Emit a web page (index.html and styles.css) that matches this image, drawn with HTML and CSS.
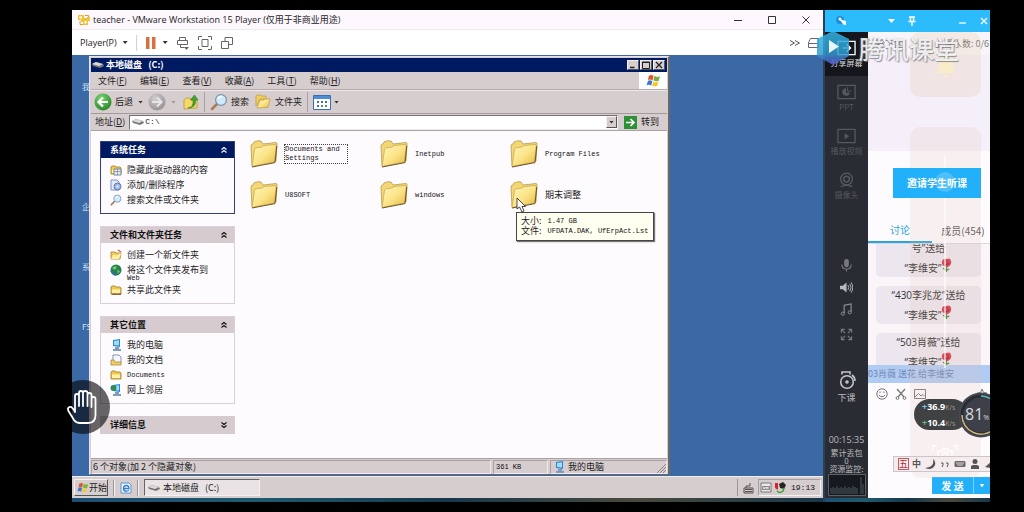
FILE: index.html
```html
<!DOCTYPE html>
<html lang="zh-CN">
<head>
<meta charset="utf-8">
<title>teacher - VMware Workstation 15 Player</title>
<link rel="stylesheet" href="styles.css">
</head>
<body>
<svg class="defs" aria-hidden="true">
  <defs>
    <linearGradient id="gFold" x1="0" y1="0" x2="1" y2="1"><stop offset="0" stop-color="#fff6b8"/><stop offset=".5" stop-color="#fbe58a"/><stop offset="1" stop-color="#e6b93f"/></linearGradient>
    <radialGradient id="gGreen" cx=".4" cy=".3" r=".8"><stop offset="0" stop-color="#7fd873"/><stop offset="1" stop-color="#1c7d22"/></radialGradient>
    <radialGradient id="gGray" cx=".4" cy=".3" r=".8"><stop offset="0" stop-color="#d2cdd0"/><stop offset="1" stop-color="#8f8b90"/></radialGradient>
    <linearGradient id="gHex" x1="0" y1="0" x2="0" y2="1"><stop offset="0" stop-color="#31b5e4"/><stop offset=".65" stop-color="#2f9cd0"/><stop offset="1" stop-color="#5b4fd0"/></linearGradient>
  </defs>
  <symbol id="folder" viewBox="0 0 28 28">
    <path d="M2 26 1 6Q1 4 3 4L4 2Q8 0 11 1L13 4 26 2.500Q27 2.500 27 4L26 21Z" fill="#f3d774" stroke="#b5994a" stroke-width=".8"/>
    <path d="M2 26.500 4.500 9.500Q5 8 6.500 7.800L12 7 14 5.500 25 4.500Q26.500 4.500 26.300 6L24.500 22Z" fill="url(#gFold)" stroke="#c4a04a" stroke-width=".7"/>
    <path d="M2 27 25 22.600 26.800 6" fill="none" stroke="#6e5523" stroke-width="1"/>
  </symbol>
  <symbol id="drive" viewBox="0 0 12 8"><path d="M0 3 4 1 11 3 12 5 8 7 1 5Z" fill="#777"/><path d="M0 3 4 1 11 3 7 5Z" fill="#d8d8d8"/></symbol>
  <symbol id="smallfolder" viewBox="0 0 12 12"><path d="M1 10V3l1-1h3l1 1h4l1 1v6Z" fill="#f2c94e" stroke="#9b7d28" stroke-width=".8"/><path d="M2 5.500h8V9H2Z" fill="#fff2a6"/></symbol>
  <symbol id="lens" viewBox="0 0 18 18"><path d="M2 16 8 10" stroke="#a97d57" stroke-width="2.600" stroke-linecap="round"/><circle cx="11" cy="7" r="5.400" fill="#cfeafb" stroke="#7793ab" stroke-width="1.200"/><path d="M8 6q1-3 4-2.500" stroke="#fff" stroke-width="1.500" fill="none"/></symbol>
  <symbol id="pc" viewBox="0 0 12 12"><path d="M3 1 10 0V8L3 7Z" fill="#2c86d8"/><path d="M4 2 9 1.300V6.500L4 6Z" fill="#9fdcff"/><path d="M5 8H9V10H11V12H3V10H5Z" fill="#7e9cc0"/></symbol>
  <symbol id="flag" viewBox="0 0 16 14"><path d="M3 2q3-2 5 0L7 7Q4 5 2 6.500Z" fill="#e0572c"/><path d="M9 2q2 2 6 .5L13.500 7.500Q11 8.500 8 7Z" fill="#79b23c"/><path d="M2 7.500q2-1.500 4.800.3L5.500 12.500Q3 11 .5 12Z" fill="#3d78cf"/><path d="M7.800 8Q10 9.500 13.300 8.500L12 13Q9 14 6.500 12.500Z" fill="#f5c732"/></symbol>
  <symbol id="up" viewBox="0 0 8 8"><path d="M1.500 3.500 4 1.500 6.500 3.500M1.500 6.500 4 4.500 6.500 6.500" fill="none" stroke="currentColor" stroke-width="1.200"/></symbol>
  <symbol id="rose" viewBox="0 0 12 16"><path d="M6 8V15M6 13 2 11M6 13 9 12" stroke="#4c8a3d" stroke-width="1.400" fill="none"/><path d="M1 3Q3 0 6 1 10-1 11 3 12 8 7 10 2 9 1 6Z" fill="#d8394b"/><path d="M4 3q3-1 4 1t-3 3M3 6q2 3 6 0" stroke="#8f1c30" fill="none" stroke-width=".9"/></symbol>
</svg>

<div class="screen">
  <main class="vm">
    <header class="vm-title">
      <svg class="vm-logo" viewBox="0 0 12 12"><path d="M0 1H6V4H9V3H12V7H10V11H5V8H3V6H0Z" fill="#efc23a"/><path d="M1.500 2.500h2.500v2h-2.500ZM6.500 7h2v2.500h-2Z" fill="#fff"/><path d="M7 1.500H10.500V3M2 7V10.500H5" stroke="#e39a28" fill="none"/></svg>
      <h1>teacher - VMware Workstation 15 Player (仅用于非商业用途)</h1>
      <div class="vm-controls">
        <button aria-label="最小化"><svg viewBox="0 0 10 10"><path d="M1 5.500H9" stroke="#333"/></svg></button>
        <button aria-label="最大化"><svg viewBox="0 0 10 10"><path d="M1.500 1.500h7v7h-7Z" fill="none" stroke="#333"/></svg></button>
        <button aria-label="关闭"><svg viewBox="0 0 10 10"><path d="M1.500 1.500 8.500 8.500M8.500 1.500 1.500 8.500" stroke="#333"/></svg></button>
      </div>
    </header>
    <div class="vm-bar">
      <button class="player">Player(P) <i class="tri"></i></button>
      <span class="vsep"></span>
      <button class="pause" aria-label="暂停"><svg viewBox="0 0 12 12"><path d="M1 0h3.500v12H1ZM7 0h3.500v12H7Z" fill="#d9713f"/></svg><i class="tri"></i></button>
      <button aria-label="发送按键"><svg class="i14" viewBox="0 0 14 14" fill="none" stroke="#666"><path d="M3.500 4.500v-3h6v3M1.500 8.500v-4h10v4ZM4.500 8.500v3h4"/><path d="M8 11h5l-2.500 3Z" fill="#666" stroke="none"/></svg></button>
      <button aria-label="全屏"><svg class="i14" viewBox="0 0 14 14" fill="none" stroke="#666"><path d="M.5 4V.500H4M10 .500h3.500V4M13.500 10v3.500H10M4 13.500H.5V10M4 3.500h6v7H4Z"/></svg></button>
      <button aria-label="Unity"><svg class="i14" viewBox="0 0 14 14" fill="none" stroke="#666"><path d="M1.500 5.500h7v7h-7ZM5 5.500v-4h7.500v7H8.500"/></svg></button>
      <div class="vm-bar-end">
        <svg class="i12" viewBox="0 0 12 12" fill="none" stroke="#555"><path d="M1 3.500 5.500 6 1 8.500M6 3.500 10.500 6 6 8.500"/></svg>
        <svg class="i12" viewBox="0 0 12 12" fill="none" stroke="#667"><path d="M1.500 10.500v-5l2-4h8v9ZM1.500 6.500h9"/></svg>
      </div>
    </div>

    <div class="desktop">
      <div class="desk-labels"><span>我</span><span>企业</span><span>系</span><span>FS</span></div>
      <section class="explorer">
        <header class="ex-title">
          <svg class="drive"><use href="#drive"/></svg>
          <h2>本地磁盘&nbsp;&nbsp; (C:)</h2>
          <button aria-label="最小化"><svg viewBox="0 0 8 8"><path d="M1 6.500H5.500" stroke="#222" stroke-width="1.500"/></svg></button>
          <button aria-label="最大化"><svg viewBox="0 0 8 8"><path d="M.5 1h7v6.500h-7ZM.5 1.500h7" fill="none" stroke="#222"/></svg></button>
          <button aria-label="关闭"><svg viewBox="0 0 8 8"><path d="M1 1 7 7M7 1 1 7" stroke="#222" stroke-width="1.300"/></svg></button>
        </header>
        <nav class="ex-menu">
          <button>文件(<u>F</u>)</button><button>编辑(<u>E</u>)</button><button>查看(<u>V</u>)</button><button>收藏(<u>A</u>)</button><button>工具(<u>T</u>)</button><button>帮助(<u>H</u>)</button>
          <span class="brand"><svg><use href="#flag"/></svg></span>
        </nav>
        <div class="ex-tools">
          <button><svg class="i18" viewBox="0 0 18 18"><circle cx="9" cy="9" r="8.500" fill="url(#gGreen)"/><path d="M14 9H5M9 4.500 4.500 9 9 13.500" stroke="#fff" stroke-width="2.200" fill="none"/></svg>后退</button>
          <i class="tri"></i>
          <button aria-label="前进"><svg class="i18" viewBox="0 0 18 18"><circle cx="9" cy="9" r="8.500" fill="url(#gGray)"/><path d="M4 9H13M9 4.500 13.500 9 9 13.500" stroke="#e9e5e7" stroke-width="2" fill="none"/></svg></button>
          <i class="tri faint"></i>
          <button aria-label="向上" class="upbtn"><svg class="i16" viewBox="0 0 16 16"><path d="M1 15V6l2-2h4l1 2h6v8Z" fill="#f6d868" stroke="#b99737" stroke-width=".8"/><path d="M5 14Q11 13 10 6H7.500L11.500 1 15 6H12.500Q13 14 5 14Z" fill="#46a332" stroke="#2b7a1f" stroke-width=".6"/></svg></button>
          <span class="vsep"></span>
          <button><svg class="i18"><use href="#lens"/></svg>搜索</button>
          <button class="fold"><svg class="i16" viewBox="0 0 16 16"><path d="M1 12V2l1-1h3l1 1h5v3H5Z" fill="#f1cf5c" stroke="#bd9a3d" stroke-width=".7"/><path d="M2 14 5 6h4l1-1h5l-2 8.500Z" fill="url(#gFold)" stroke="#bd9a3d" stroke-width=".7"/></svg>文件夹</button>
          <span class="vsep"></span>
          <button aria-label="查看"><svg class="view" viewBox="0 0 18 15"><path d="M.5.500h17v14H.5Z" fill="#fff" stroke="#3b6fb4"/><path d="M1 1h16v3H1Z" fill="#4c8bd6"/><path d="M4 6h2v2H4ZM8 6h2v2H8ZM12 6h2v2h-2ZM4 10h2v2H4Z" fill="#4a6c9e"/><path d="M8 10h2v2H8ZM12 10h2v2h-2Z" fill="#4b9a52"/></svg><i class="tri"></i></button>
        </div>
        <div class="ex-addr">
          <label for="addr">地址(<u>D</u>)</label>
          <div class="addr-box"><svg class="drive"><use href="#drive"/></svg><input id="addr" value="C:\"><button aria-label="展开"><i class="tri"></i></button></div>
          <button class="go"><svg class="i13" viewBox="0 0 13 13"><path d="M0 0h13v13H0Z" fill="#2f9136"/><path d="M2 6.500h8M6.500 3 10 6.500 6.500 10" stroke="#fff" stroke-width="1.600" fill="none"/></svg>转到</button>
        </div>
        <div class="ex-body">
          <aside class="tasks">
            <section class="panel primary">
              <h3>系统任务<svg><use href="#up"/></svg></h3>
              <ul>
                <li><svg viewBox="0 0 12 12"><use href="#smallfolder"/><path d="M4 5h7v6H4Z" fill="#e9edf2" stroke="#789"/><path d="M4 7.500h7M7.500 5v6" stroke="#789" stroke-width=".7"/></svg><a href="#">隐藏此驱动器的内容</a></li>
                <li><svg viewBox="0 0 12 12"><path d="M1 1h6l2 2v8H1Z" fill="#e3ecfa" stroke="#7d93c2"/><circle cx="7.500" cy="7.500" r="3.500" fill="#9fb7e6" stroke="#5e78b8"/><circle cx="7.500" cy="7.500" r="1" fill="#fff"/></svg><a href="#">添加/删除程序</a></li>
                <li><svg><use href="#lens"/></svg><a href="#">搜索文件或文件夹</a></li>
              </ul>
            </section>
            <section class="panel">
              <h3>文件和文件夹任务<svg><use href="#up"/></svg></h3>
              <ul>
                <li><svg viewBox="0 0 12 12"><path d="M1 10V3h4l1 1h5l-1 6Z" fill="#f2cb58" stroke="#a5802d" stroke-width=".8"/><path d="M1 10 3 6h5L10 4l1 1-2 5Z" fill="#fff0a0"/><path d="M8 1 11 3" stroke="#d8603c" stroke-width="1.500"/></svg><a href="#">创建一个新文件夹</a></li>
                <li><svg viewBox="0 0 12 12"><circle cx="6" cy="6" r="5.500" fill="#2b7d52"/><path d="M2 4q3-3 5-1L5 6ZM7 6l3 1-2 3Z" fill="#6ccf66"/><path d="M1 7q2 4 5 4" stroke="#2d6fc0" stroke-width="1.500" fill="none"/></svg><a href="#">将这个文件夹发布到<br><span class="latin">Web</span></a></li>
                <li><svg viewBox="0 0 12 12"><use href="#smallfolder"/><path d="M1 11q3-3 6-1l4-1v2Z" fill="#8a6a3a"/></svg><a href="#">共享此文件夹</a></li>
              </ul>
            </section>
            <section class="panel">
              <h3>其它位置<svg><use href="#up"/></svg></h3>
              <ul>
                <li><svg><use href="#pc"/></svg><a href="#">我的电脑</a></li>
                <li><svg viewBox="0 0 12 12"><path d="M3 1h6l2 2v6H3Z" fill="#f3f7ff" stroke="#8795b5"/><path d="M1 11V6h3l1 2h6v3Z" fill="#f1cf62" stroke="#a88a3a" stroke-width=".8"/></svg><a href="#">我的文档</a></li>
                <li><svg><use href="#smallfolder"/></svg><a href="#" class="latin">Documents</a></li>
                <li><svg viewBox="0 0 12 12"><use href="#pc"/><circle cx="3.500" cy="4" r="3" fill="#2f8a55"/></svg><a href="#">网上邻居</a></li>
              </ul>
            </section>
            <section class="panel closed">
              <h3>详细信息<svg class="flip"><use href="#up"/></svg></h3>
            </section>
          </aside>
          <ul class="files">
            <li><svg><use href="#folder"/></svg><span class="latin focus">Documents and<br>Settings</span></li>
            <li><svg><use href="#folder"/></svg><span class="latin">Inetpub</span></li>
            <li><svg><use href="#folder"/></svg><span class="latin">Program Files</span></li>
            <li><svg><use href="#folder"/></svg><span class="latin">U8SOFT</span></li>
            <li><svg><use href="#folder"/></svg><span class="latin">windows</span></li>
            <li><svg><use href="#folder"/></svg><span>期末调整</span>
              <div class="tip" role="tooltip"><p>大小: <b>1.47 GB</b></p><p>文件: <b>UFDATA.DAK, UfErpAct.Lst</b></p></div>
              <svg class="cursor" viewBox="0 0 10 16"><path d="M1 1V12L3.500 10 6 15 8 14 6 9.500H9.500Z" fill="#fff" stroke="#333" stroke-width=".9"/></svg>
            </li>
          </ul>
        </div>
        <footer class="ex-status">
          <span class="cell grow">6 个对象(加 2 个隐藏对象)</span>
          <span class="cell size latin">361 KB</span>
          <span class="cell place"><svg class="i12"><use href="#pc"/></svg>我的电脑</span>
          <svg class="grip" viewBox="0 0 10 10"><path d="M1 10 10 1M4 10 10 4M7 10 10 7" stroke="#8c8486"/></svg>
        </footer>
      </section>
    </div>

    <footer class="taskbar">
      <button class="start"><svg><use href="#flag"/></svg>开始</button>
      <span class="groove"></span>
      <button aria-label="Internet Explorer"><svg class="i12" viewBox="0 0 12 12"><path d="M1 1h8l2 2v8H1Z" fill="#eef5fc" stroke="#5c96cf"/><path d="M3.500 6.500H9Q9 3.500 6.300 3.500 3.500 3.500 3.500 6.500 3.500 9.200 6.300 9.200 8 9.200 8.800 8" fill="none" stroke="#2d7fd0" stroke-width="1.300"/></svg></button>
      <span class="groove"></span>
      <button class="task"><svg class="drive"><use href="#drive"/></svg>本地磁盘&nbsp;&nbsp; (C:)</button>
      <div class="tray">
        <svg class="i12 kbd" viewBox="0 0 12 12"><path d="M1 6h9v5H1ZM3 6V4H7V1" fill="none" stroke="#554f50"/><path d="M2 7.500h7M2 9.500h7" stroke="#554f50"/></svg>
        <div class="tray-in">
          <svg class="i12" viewBox="0 0 12 12"><path d="M1 1h10v9H1Z" fill="#ece8ea" stroke="#777"/><path d="M2 4h8v4H2Z" fill="#8d898c"/><path d="M3 5l1 2 1-2M6 7V5l1 1.500L8 5v2" stroke="#fff" stroke-width=".7" fill="none"/></svg>
          <svg class="i12" viewBox="0 0 12 12"><path d="M1 1h3v7L1 6Z" fill="#d7222a"/><path d="M5 2 9 0l3 3-2 4-4-1Z" fill="#2b2224"/><path d="M3 9q3 3 6 0l1-3" fill="none" stroke="#3ba33a" stroke-width="1.600"/></svg>
          <time class="latin">19:13</time>
        </div>
      </div>
    </footer>
    <div class="wallpaper"></div>
  </main>

  <aside class="classroom">
    <header class="cl-title">
      <svg class="i12" viewBox="0 0 12 12"><circle cx="5" cy="5" r="4" fill="#1b8fd6"/><path d="M4 4 9 10H11V6" fill="#fff"/><circle cx="5" cy="4" r="1.500" fill="#fff"/></svg>
      <div class="cl-controls">
        <button aria-label="菜单"><i class="tri white"></i></button>
        <button aria-label="置顶"><svg viewBox="0 0 10 10"><path d="M2 1H8M3.500 1V5M6.500 1V5M1.500 5.500H8.500M5 6V10" stroke="#fff" stroke-width="1.400" fill="none"/></svg></button>
        <button aria-label="最小化" class="minb"><svg viewBox="0 0 10 10"><path d="M2 7H9" stroke="#fff" stroke-width="1.300"/></svg></button>
        <button aria-label="关闭"><svg viewBox="0 0 10 10"><path d="M2 2 8 8M8 2 2 8" stroke="#fff" stroke-width="1.400"/></svg></button>
      </div>
    </header>
    <div class="cl-main">
      <nav class="rail">
        <div class="rail-top">
          <button class="on"><svg viewBox="0 0 20 16"><path d="M1 1h18v14H1Z" fill="none" stroke="#fff" stroke-width="1.400"/><path d="M10 4 14 8 10 12M6 8h8" stroke="#fff" stroke-width="1.800" fill="none"/></svg>分享屏幕</button>
          <button><svg viewBox="0 0 20 16"><path d="M1 1h18v14H1Z" fill="none" stroke="currentColor" stroke-width="1.400"/><path d="M9.500 4A4 4 0 1 0 13.500 8.500H9.500Z" fill="currentColor"/><path d="M11 3v4h3.500" stroke="currentColor" fill="none"/></svg>PPT</button>
          <button><svg viewBox="0 0 20 16"><path d="M1 1h18v14H1Z" fill="none" stroke="currentColor" stroke-width="1.400"/><path d="M8 5 13 8.200 8 11.500Z" fill="currentColor"/></svg>播放视频</button>
          <button><svg viewBox="0 0 20 16"><circle cx="10" cy="7" r="6.200" fill="none" stroke="currentColor" stroke-width="1.400"/><circle cx="10" cy="7" r="3" fill="none" stroke="currentColor" stroke-width="1.600"/><path d="M4 15q6-3 12 0" stroke="currentColor" stroke-width="1.400" fill="none"/></svg>摄像头</button>
        </div>
        <div class="rail-mid">
          <button aria-label="麦克风"><svg viewBox="0 0 14 14"><rect x="4.500" y="0" width="5" height="9" rx="2.500" fill="#77797e"/><path d="M2 6q0 5 5 5t5-5M7 11v2.500" fill="none" stroke="#77797e" stroke-width="1.200"/></svg></button>
          <button aria-label="扬声器"><svg viewBox="0 0 14 14"><path d="M0 5H3L7 1.500V12.500L3 9H0Z" fill="#b9bbbf"/><path d="M8.500 4.500q2 2.500 0 5M10.500 3q3 4 0 8M12 1.500q3.500 5.500 0 11" fill="none" stroke="#b9bbbf"/></svg></button>
          <button aria-label="音乐"><svg viewBox="0 0 14 14"><path d="M4.500 11V2.500L12 1V9.500" fill="none" stroke="#909297" stroke-width="1.200"/><circle cx="3" cy="11.500" r="1.700" fill="none" stroke="#909297"/><circle cx="10.500" cy="10" r="1.700" fill="none" stroke="#909297"/></svg></button>
          <button aria-label="全屏"><svg viewBox="0 0 14 14"><path d="M1.500 5V1.500H5M9 1.500h3.500V5M12.500 9v3.500H9M5 12.500H1.500V9M2 2 5.500 5.500M12 2 8.500 5.500M2 12 5.500 8.500M12 12 8.500 8.500" fill="none" stroke="#77797e" stroke-width="1.200"/></svg></button>
        </div>
        <div class="rail-end">
          <button><svg viewBox="0 0 20 20"><circle cx="10" cy="12" r="6.300" fill="none" stroke="#c3c5c8" stroke-width="1.600"/><circle cx="10" cy="12" r="1.800" fill="#c3c5c8"/><path d="M5 4.500V2H13V4.500M15 5q3 2 3 6" fill="none" stroke="#c3c5c8" stroke-width="1.600"/></svg>下课</button>
          <time>00:15:35</time>
          <p>累计丢包<br>0<br>资源监控:</p>
          <svg class="graph" viewBox="0 0 38 22" preserveAspectRatio="none"><path d="M.5.500h37v21H.5Z" fill="#16191d" stroke="#5c6166"/><path d="M3 20V14M5 20V13M7 20V14M9 20V12M11 20V14M13 20V13M15 20V14M17 20V12M19 20V14M21 20V13M23 20V14M25 20V12M27 20V13M29 20V14M33 20V3M35 20V10" stroke="#4b5a5f"/></svg>
        </div>
      </nav>
      <section class="room">
        <div class="room-bar"><span>铃下区</span><span>上课人数: 0/6</span></div>
        <div class="stage"></div>
        <div class="invite"><button>邀请学生听课</button></div>
        <div class="tabs"><button class="active">讨论</button><button>成员(454)</button></div>
        <div class="chat">
          <p>号”送给<br>“李维安”<svg><use href="#rose"/></svg></p>
          <p>“430李兆龙”送给<br>“李维安”<svg><use href="#rose"/></svg></p>
          <p>“503肖薇”送给<br>“李维安”<svg><use href="#rose"/></svg></p>
        </div>
        <div class="notice">503肖薇 送花 给李维安</div>
        <div class="compose">
          <button aria-label="表情"><svg viewBox="0 0 12 12" fill="none" stroke="#777"><circle cx="6" cy="6" r="5.200"/><path d="M3 7q3 3.500 6 0M4 3.500v1.500M8 3.500v1.500"/></svg></button>
          <button aria-label="截图"><svg viewBox="0 0 12 12" fill="none" stroke="#777"><path d="M2 1 9 9M10 1 3 9" stroke-width="1.300"/><circle cx="2.500" cy="10" r="1.400"/><circle cx="9.500" cy="10" r="1.400"/></svg></button>
          <button aria-label="图片"><svg viewBox="0 0 12 12" fill="none" stroke="#777"><path d="M.5 1.500h11v9H.5ZM1 9 4.500 5.500 7 8 9 6.500 11 8.500"/></svg></button>
          <button aria-label="收藏" class="star"><svg viewBox="0 0 12 12" fill="none" stroke="#777"><path d="M6 1 7.500 4.500 11 5 8.500 7.500 9 11 6 9.300 3 11 3.500 7.500 1 5 4.500 4.500Z"/></svg></button>
        </div>
        <div class="send"><button>发 送</button><button aria-label="更多" class="more"><i class="tri white"></i></button></div>
        <div class="ghost g1"><svg viewBox="0 0 24 26"><path d="M12 1q2 0 2 2 5 1 5 8v6l4 4H1l4-4v-6q0-7 5-8 0-2 2-2ZM9 23h6l-3 3Z" fill="#f9edc9"/></svg></div>
        <div class="ghost g2"><i></i><b></b><svg viewBox="0 0 26 20" fill="none" stroke="#fff" stroke-width="2"><path d="M1 6V2H5M21 2h4v4M25 14v4h-4M5 18H1V14M6 7h3l2-2h4l2 2h3v8H6Z"/><circle cx="13" cy="11" r="2.500"/></svg></div>
      </section>
    </div>
    <div class="wallpaper"></div>
    <div class="watermark"><svg viewBox="0 0 38 34"><path d="M18 0 34 8V25L18 34 2 25V8Z" fill="url(#gHex)" opacity=".85"/><path d="M14 9 24 15.500 14 22Z" fill="#e8f5fc"/></svg><span>腾讯课堂</span></div>
    <div class="ime"><span class="wu">五</span><span class="zh">中</span>
      <svg viewBox="0 0 12 12"><path d="M9 1Q11 9 1 10 8 13 11 7 12 3 9 1Z" fill="#555"/></svg>
      <svg viewBox="0 0 12 12"><path d="M2 5h2v2L3 9M7 5h2v2L8 9" fill="none" stroke="#555"/></svg>
      <svg viewBox="0 0 12 12"><rect x=".5" y="3" width="11" height="6" rx="1.500" fill="#666"/><path d="M2 5h8M3 7h6" stroke="#ddd"/></svg>
      <svg viewBox="0 0 12 12"><circle cx="6" cy="3.500" r="2.500" fill="#555"/><path d="M2 11V8l2-1h4l2 1v3Z" fill="#555"/></svg>
      <svg viewBox="0 0 12 12"><path d="M1 9 8 3l3 3-5 4Z" fill="#555"/></svg>
    </div>
    <div class="speed"><p><i class="upl">+</i>36.9<small>K/s</small></p><p><i class="dnl">+</i>10.4<small>K/s</small></p></div>
    <div class="clip"><div class="gauge"><svg viewBox="0 0 46 46" fill="none"><circle cx="23" cy="23" r="22.500" fill="#454851"/><circle cx="23" cy="23" r="19" stroke="#2a2d34" stroke-width="3" fill="#3d4048"/><path d="M4 23A19 19 0 0 0 36 37" stroke="#cdb676" stroke-width="1.500"/><path d="M23 4A19 19 0 0 1 40 15" stroke="#58b9c3" stroke-width="1.500"/></svg><span>81<small>%</small></span></div></div>
  </aside>

  <button class="hand" aria-label="举手"><svg viewBox="0 0 34 38" fill="none" stroke="#fff" stroke-width="1.800" stroke-linecap="round" stroke-linejoin="round"><path d="M9 24V8q0-2 2-2t2 2V18M13 8V5q0-2 2-2t2 2V18M17 5q0-2 2.200-2T21.500 5V18M21.500 7q0-2 2-2t2 2V19M25.500 11q0-2 2-2t2 2V27Q29.500 35 22 35H14Q10 35 8 32L2.500 23Q1 20 3.500 19T9 24"/></svg></button>
</div>
</body>
</html>
```

FILE: styles.css
```css
* { box-sizing: border-box; }
body {
  margin: 0;
  background: #000;
  color: #222;
  font-family: "Noto Sans CJK SC", sans-serif;
  font-size: 9px;
  line-height: 12px;
}
h1, h2, h3, p, ul { margin: 0; padding: 0; font: inherit; }
ul { list-style: none; }
button, input { font: inherit; color: inherit; background: none; border: 0; padding: 0; margin: 0; }
button { display: flex; align-items: center; flex: none; white-space: nowrap; }
a { color: inherit; text-decoration: none; }
svg { flex: none; display: block; }
.defs { position: absolute; width: 0; height: 0; }
.latin, .tip b { font-family: "Liberation Mono", monospace; font-size: 7px; font-weight: normal; line-height: 9px; color: #111; }
.i12 { width: 12px; height: 12px; }
.i13 { width: 13px; height: 13px; }
.i14 { width: 14px; height: 14px; }
.i16 { width: 16px; height: 16px; }
.i18 { width: 18px; height: 18px; }
.drive { width: 12px; height: 8px; }
.tri { width: 5px; height: 3px; background: #333; clip-path: polygon(0 0, 100% 0, 50% 100%); }
.tri.faint { background: #999; }
.tri.white { background: #fff; width: 7px; height: 4px; }

.screen { position: relative; display: flex; min-height: 100vh; padding: 10px 34px 10px 72px; }

/* virtual machine window */
.vm { flex: 1; min-width: 0; display: flex; flex-direction: column; background: #fff; }
.vm-title { display: flex; align-items: center; gap: 3px; height: 20px; padding: 0 12px 0 6px; background: #fdf8fd; border-bottom: 1px solid #efe9ef; }
.vm-title h1 { flex: 1; font-family: "Open Sans", "Noto Sans CJK SC", sans-serif; font-size: 9px; color: #222; white-space: nowrap; }
.vm-logo { width: 12px; height: 12px; }
.vm-controls { display: flex; gap: 24px; }
.vm-controls svg { width: 10px; height: 10px; }
.vm-bar { display: flex; align-items: center; gap: 8px; height: 25px; padding: 0 4px 0 8px; }
.vm-bar button { gap: 6px; }
.vm-bar .pause svg { width: 12px; height: 12px; }
.player { font-family: "Open Sans", sans-serif; }
.vsep { width: 1px; height: 16px; background: #d8cfd4; }
.vm-bar-end { margin-left: auto; display: flex; gap: 6px; }

.desktop { position: relative; flex: 1; min-height: 421px; background: #3b69a5; overflow: hidden; }
.desk-labels { display: flex; flex-direction: column; gap: 48px; width: 18px; padding: 26px 0 0 10px; color: #cfe0f4; font-size: 8px; }
.desk-labels span { white-space: nowrap; height: 12px; }
.desk-labels span:first-child { margin-bottom: 60px; }

/* explorer window */
.explorer { position: absolute; left: 17px; right: 153px; top: 1px; bottom: 1px; display: flex; flex-direction: column; padding: 1px 1px 0; background: #d6cdcf; border: 1px solid #e8e2ea; border-right: 2px solid #6b6668; border-bottom-color: #6b6668; }
.ex-title { display: flex; align-items: center; gap: 1px; height: 14px; padding: 0 2px 0 1px; background: #001a62; color: #fff; }
.ex-title h2 { flex: 1; margin-left: 1px; font-weight: bold; }
.ex-title button { width: 12px; height: 10px; justify-content: center; background: #d6cdcf; border: 1px solid #f5f0f2; border-right-color: #555; border-bottom-color: #555; }
.ex-title svg:not(.drive) { width: 8px; height: 8px; }
.ex-menu { display: flex; align-items: center; gap: 13px; height: 18px; padding-left: 7px; border-bottom: 1px solid #b5abad; }
.brand { display: flex; align-items: center; justify-content: center; align-self: stretch; width: 28px; margin-left: auto; background: #fff; }
.brand svg { width: 15px; height: 13px; }
.ex-tools { display: flex; align-items: center; gap: 5px; height: 24px; padding-left: 3px; border-top: 1px solid #eee8ea; border-bottom: 1px solid #a39a9c; }
.ex-tools button { gap: 3px; }
.ex-tools .fold { gap: 4px; margin-left: 1px; }
.upbtn { margin-left: 2px; }
.view { width: 18px; height: 15px; }
.ex-tools .vsep { height: 20px; background: #aaa0a3; }
.ex-addr { display: flex; align-items: center; gap: 4px; height: 17px; padding: 0 8px 0 4px; border-bottom: 1px solid #a9a1a3; }
.addr-box { flex: 1; display: flex; align-items: center; gap: 1px; height: 15px; padding-left: 2px; background: #fff; border: 1px solid #777072; border-right-color: #eee; border-bottom-color: #eee; }
.addr-box input { flex: 1; min-width: 0; height: 12px; font-family: "Liberation Mono", monospace; font-size: 8px; }
.addr-box button { width: 11px; height: 12px; justify-content: center; background: #d6cdcf; border: 1px solid #f5f0f2; border-right-color: #555; border-bottom-color: #555; }
.go { gap: 4px; margin-left: 2px; }
.ex-body { flex: 1; display: flex; background: #fefbff; }
.tasks { width: 144px; padding: 10px 0 0 9px; display: flex; flex-direction: column; gap: 12px; }
.panel { border: 1px solid #dccfdb; }
.panel h3 { display: flex; align-items: center; justify-content: space-between; height: 16px; padding: 0 6px 0 9px; background: #d6cbcf; color: #111; font-weight: bold; }
.panel h3 svg { width: 8px; height: 8px; }
.panel .flip { transform: rotate(180deg); }
.panel.primary { border-color: #33407c; }
.panel.primary h3 { background: #001a62; color: #fff; }
.panel ul { display: flex; flex-direction: column; gap: 3px; padding: 6px 0 7px 9px; }
.panel li { display: flex; gap: 5px; line-height: 12px; white-space: nowrap; }
.panel li a { line-height: 12px; }
.panel li .latin { line-height: 5px; display: block; }
.panel li a.latin { line-height: 12px; }
.panel br { display: none; }
.panel li svg { width: 12px; height: 12px; }
.panel.closed { border-color: #d6cbcf; }

.files { display: grid; grid-template-columns: repeat(3, 130px); grid-auto-rows: 28px; row-gap: 13px; align-content: start; padding: 9px 0 0 15px; }
.files li { position: relative; display: flex; align-items: center; gap: 7px; white-space: nowrap; }
.files li > svg:first-child { width: 28px; height: 28px; }
.focus { padding-right: 7px; outline: 1px dotted #444; }
.tip { position: absolute; left: 6px; top: 31px; padding: 3px 5px 4px 4px; background: #fffff0; border: 1px solid #444; box-shadow: 1px 1px 1px #777; }
.tip p { display: flex; align-items: center; gap: 6px; height: 10px; line-height: 10px; }
.cursor { position: absolute; left: 6px; top: 16px; width: 10px; height: 16px; }

.ex-status { position: relative; display: flex; gap: 2px; height: 16px; padding-top: 1px; border-top: 1px solid #a9a1a3; }
.cell { display: flex; align-items: center; gap: 3px; height: 14px; padding-left: 1px; border: 1px solid #a9a0a3; border-right-color: #f0eaec; border-bottom-color: #f0eaec; }
.cell.grow { flex: 1; }
.cell.size { width: 55px; padding-left: 2px; }
.cell.place { width: 117px; padding-left: 2px; }
.grip { position: absolute; right: 1px; bottom: 1px; width: 10px; height: 10px; }

.taskbar { display: flex; align-items: center; gap: 5px; height: 22px; padding: 0 2px; background: #d6cdcf; border-top: 1px solid #f2edef; }
.start { gap: 0; height: 17px; width: 34px; padding-left: 2px; border: 1px solid #f5f0f2; border-right-color: #555; border-bottom-color: #555; }
.start svg { width: 12px; height: 11px; }
.groove { width: 2px; height: 16px; border-left: 1px solid #9d9496; border-right: 1px solid #f5f0f2; }
.task { width: 116px; height: 17px; gap: 3px; padding-left: 3px; background: #e9e3e5; border: 1px solid #666; border-right-color: #f5f0f2; border-bottom-color: #f5f0f2; }
.tray { display: flex; align-items: center; gap: 3px; margin-left: auto; padding-left: 5px; border-left: 1px solid #9d9496; }
.tray-in { display: flex; align-items: center; gap: 2px; height: 17px; padding: 0 5px 0 1px; border: 1px solid #a79ea0; border-right-color: #f5f0f2; border-bottom-color: #f5f0f2; }
.tray-in time { margin-left: 3px; font-size: 8px; }
.wallpaper { height: 4px; background: linear-gradient(90deg, #1e4f73, #1f5a6d, #17384c, #4a4a3d, #17384c); }

/* classroom window */
.classroom { position: relative; width: 167px; flex: none; display: flex; flex-direction: column; border-left: 2px solid #2c3f55; }
.cl-title { display: flex; align-items: center; justify-content: space-between; height: 22px; padding: 0 1px 0 10px; background: #2dbcfb; }
.cl-controls { display: flex; align-items: center; gap: 12px; }
.cl-controls svg { width: 10px; height: 10px; }
.cl-controls .minb { margin-left: 28px; }
.cl-main { flex: 1; display: flex; }
.rail { width: 43px; display: flex; flex-direction: column; background: #292c32; color: #55585e; }
.rail button { flex-direction: column; gap: 2px; }
.rail-top { display: flex; flex-direction: column; align-items: stretch; }
.rail-top button { height: 44px; padding-top: 8px; font-size: 8px; line-height: 10px; }
.rail-top button.on { background: #14161b; color: #d5d6d8; }
.rail-top svg { width: 19px; height: 16px; }
.rail-mid { display: flex; flex-direction: column; align-items: center; gap: 9px; margin-top: 51px; }
.rail-mid svg { width: 13px; height: 13px; }
.rail-mid button:last-child { margin-top: 3px; }
.rail-end { display: flex; flex-direction: column; align-items: center; margin-top: auto; padding-bottom: 2px; color: #b9bbbe; text-align: center; font-size: 8px; line-height: 8px; }
.rail-end button { font-size: 9px; line-height: 12px; margin-bottom: 30px; }
.rail-end button svg { width: 20px; height: 20px; }
.rail-end time { font-family: "Open Sans", sans-serif; font-size: 9px; line-height: 12px; margin-bottom: 3px; }
.graph { width: 38px; height: 22px; margin-top: 1px; }

.room { position: relative; flex: 1; min-width: 0; display: flex; flex-direction: column; background: #fdfbfe; }
.room-bar { display: flex; align-items: center; justify-content: space-between; height: 23px; padding: 0 1px 0 8px; background: #f8f5fa; color: #777; white-space: nowrap; }
.stage { height: 96px; background: #f4eff8; }
.invite { height: 68px; padding: 17px 9px 0 25px; }
.invite button { position: relative; z-index: 1; width: 100%; height: 30px; justify-content: center; background: #23b0fb; color: #fff; font-size: 10px; font-weight: bold; }
.tabs { display: flex; height: 25px; border-bottom: 1px solid #d8d8e0; font-size: 10px; color: #555; }
.tabs button { flex: 1; justify-content: center; padding-left: 4px; }
.tabs .active { flex: 0 0 64px; padding: 0; color: #2aa5dc; border-bottom: 2px solid #2aa5dc; }
.chat { flex: 1 1 0; min-height: 0; display: flex; flex-direction: column; gap: 9px; padding: 0 9px 0 8px; overflow: hidden; justify-content: center; background: #fbf5fa; }
.chat p { flex: none; background: #ece6ee; border-radius: 5px; text-align: center; font-family: "Open Sans", "Noto Sans CJK SC", sans-serif; font-size: 10px; line-height: 19px; height: 38px; color: #333; white-space: nowrap; }
.chat svg { display: inline-block; width: 11px; height: 15px; vertical-align: -1px; }
.notice { height: 18px; background: #b1ccf3; color: #6e88b4; line-height: 17px; white-space: nowrap; overflow: hidden; text-indent: -5px; }
.compose { display: flex; gap: 7px; height: 94px; padding: 5px 2px 0 8px; align-items: flex-start; }
.compose svg { width: 12px; height: 12px; }
.compose .star { margin-left: auto; }
.send { display: flex; justify-content: flex-end; height: 21px; padding-bottom: 4px; }
.send button { width: 41px; justify-content: center; background: #23b0fb; color: #fff; font-size: 10px; font-weight: bold; }
.send .more { width: 17px; border-left: 1px solid #7fd0fb; }
.send .more .tri { width: 5px; }
.ghost { position: absolute; right: 9px; width: 71px; border-radius: 10px; background: rgba(225, 190, 150, .2); pointer-events: none; }
.g1 { top: 0; height: 65px; }
.g1 svg { width: 24px; height: 26px; margin: 20px auto 0; }
.g2 { top: 95px; bottom: 20px; background: rgba(225, 190, 170, .17); }
.g2 i { position: absolute; left: 34px; top: 29px; width: 2px; bottom: 110px; background: rgba(255, 255, 255, .6); }
.g2 b { position: absolute; z-index: 2; left: 25px; top: 45px; width: 20px; height: 20px; border-radius: 50%; background: rgba(255, 255, 255, .2); }
.g2 svg { position: absolute; left: 22px; bottom: 14px; width: 26px; height: 20px; opacity: .7; }

/* floating overlays */
.watermark { position: absolute; left: -10px; top: 21px; display: flex; align-items: center; gap: 6px; color: rgba(255, 255, 255, .85); font-size: 25px; font-weight: 500; line-height: 34px; text-shadow: 1px 1px 1px rgba(120, 120, 130, .8), -1px 0 1px rgba(120, 120, 130, .5); white-space: nowrap; }
.watermark svg { width: 38px; height: 34px; }
.ime { position: absolute; right: 0; bottom: 30px; display: flex; align-items: center; gap: 3px; width: 97px; height: 16px; padding-left: 4px; overflow: hidden; background: #f5ecee; border: 1px solid #cfc4c8; border-right: 0; }
.ime svg { width: 12px; height: 12px; }
.ime .wu { border: 1px solid #c56; color: #a33; width: 12px; line-height: 10px; text-align: center; }
.ime .zh { width: 12px; text-align: center; font-weight: bold; color: #555; }
.speed { position: absolute; right: 22px; bottom: 72px; width: 54px; height: 31px; padding-left: 8px; border-radius: 16px; background: rgba(50, 52, 54, .93); color: #fff; font-family: "Open Sans", sans-serif; font-weight: bold; font-size: 9px; line-height: 15px; }
.speed small { font-size: 7px; color: #999; font-weight: normal; }
.speed i { font-style: normal; }
.upl { color: #7bc6e0; }
.dnl { color: #6cba78; }
.clip { position: absolute; right: 0; bottom: 64px; width: 32px; height: 46px; overflow: hidden; }
.gauge { position: relative; width: 46px; height: 46px; }
.gauge span { position: absolute; left: 7px; top: 13px; color: #d9dade; font-family: "Open Sans", sans-serif; font-size: 16px; line-height: 18px; white-space: nowrap; }
.gauge small { font-size: 7px; }
.hand { position: absolute; left: 56px; bottom: 78px; width: 54px; height: 54px; border-radius: 50%; justify-content: center; background: rgba(0, 0, 0, .6); }
.hand svg { width: 34px; height: 38px; }
```
